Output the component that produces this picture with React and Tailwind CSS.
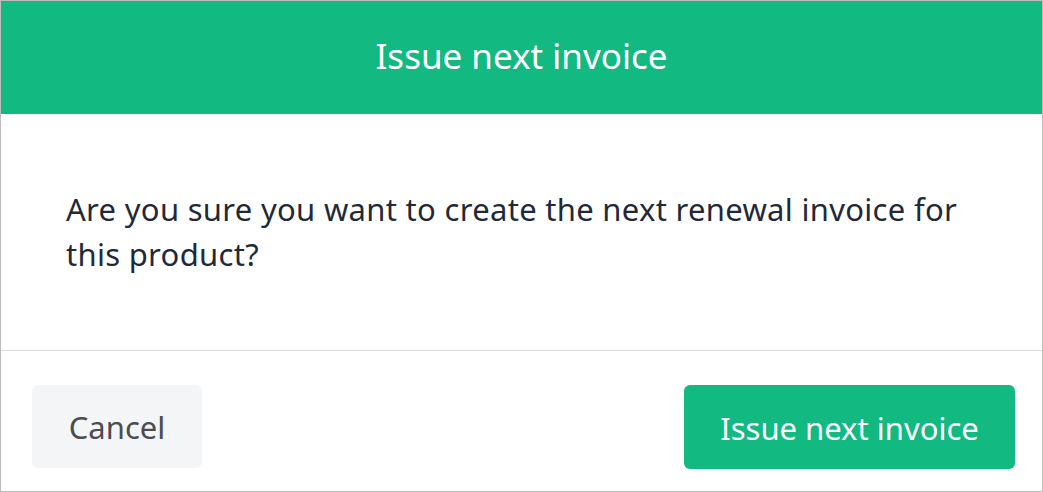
import React from "react";

const App = () => {
  return (
    <div
      className="w-[1043px] h-[492px] border border-[#bdbdbd] bg-white flex flex-col"
      style={{ fontFamily: '"Noto Sans", "Open Sans", sans-serif' }}
    >
      {/* Header */}
      <div className="h-[113px] shrink-0 bg-[#12b981] flex items-center justify-center pb-[4px]">
        <h2 className="text-[35px] text-white leading-none">Issue next invoice</h2>
      </div>

      {/* Body */}
      <div className="h-[236px] shrink-0 px-[65px] pt-[73px]">
        <p className="text-[31px] tracking-[0.3px] leading-[45px] text-[#1f2937]">
          Are you sure you want to create the next renewal invoice for this product?
        </p>
      </div>

      {/* Footer */}
      <div className="flex-1 border-t border-[#dcdcdc] flex items-start justify-between pl-[31px] pr-[27px] pt-[34px]">
        <button
          type="button"
          className="w-[170px] h-[83px] rounded-md bg-[#f4f5f7] text-[31px] text-[#4a4d52] pt-[2px]"
        >
          Cancel
        </button>
        <button
          type="button"
          className="w-[331px] h-[84px] rounded-md bg-[#12b981] text-[31px] text-white pt-[2px]"
        >
          Issue next invoice
        </button>
      </div>
    </div>
  );
};

export default App;
